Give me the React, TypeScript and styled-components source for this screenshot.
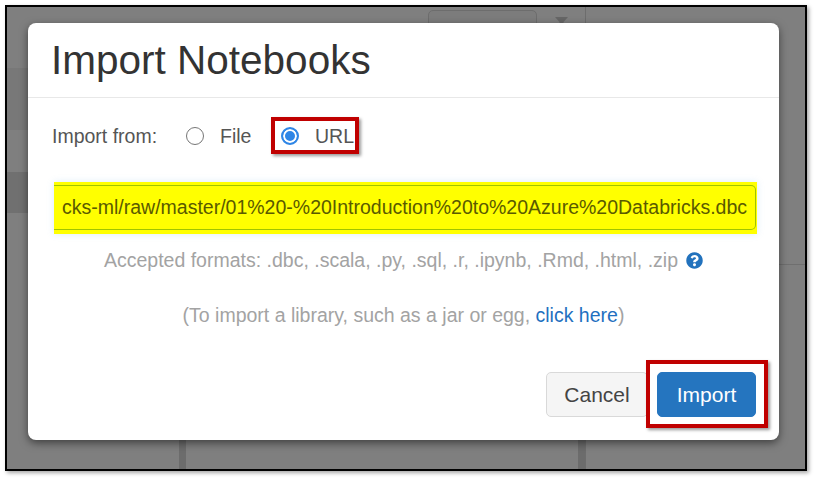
import React from "react";
import styled, { createGlobalStyle } from "styled-components";
import { FaQuestionCircle } from "react-icons/fa";

const Global = createGlobalStyle`
  html, body { margin: 0; padding: 0; background: #fff; }
  body { width: 816px; height: 480px; overflow: hidden; font-family: "Liberation Sans", Arial, sans-serif; }
`;

const Shot = styled.div`
  width: 816px;
  height: 480px;
  box-sizing: border-box;
  padding: 5px 9px 9px 5px;
`;

const Frame = styled.div`
  position: relative;
  height: 100%;
  box-sizing: border-box;
  border: 2px solid #000;
  box-shadow: 2px 2px 4px rgba(0, 0, 0, 0.35);
  background: #7f7f7f;
`;

const Backdrop = styled.div`
  display: grid;
  grid-template-columns: 172px 7px 392px 7px 1fr;
  height: 100%;
`;

const LeftColumn = styled.div`
  display: flex;
  flex-direction: column;
`;

const Band = styled.div<{ $top: number; $height: number; $tone: string }>`
  margin-top: ${(p) => p.$top}px;
  height: ${(p) => p.$height}px;
  background: ${(p) => p.$tone};
`;

const Divider = styled.div`
  margin-top: 120px;
  background: #6c6c6c;
`;

const MiddleColumn = styled.div`
  display: flex;
  justify-content: flex-end;
  padding: 3px 10px 0 0;
  gap: 18px;
  align-items: flex-start;
`;

const GhostButton = styled.div`
  width: 109px;
  height: 30px;
  box-sizing: border-box;
  border: 1px solid #6d6d6d;
  border-radius: 5px;
  background: #7c7c7c;
`;

const GhostFilter = styled.svg`
  width: 13px;
  height: 12px;
  margin-top: 7px;
  fill: #666;
`;

const RightColumn = styled.div`
  padding-top: 257px;
  border-left: 1px solid #6d6d6d;
`;

const RuleLine = styled.div`
  height: 1px;
  background: #6f6f6f;
`;

const Dialog = styled.div`
  position: absolute;
  left: 21px;
  top: 16px;
  width: 751px;
  height: 417px;
  display: flex;
  flex-direction: column;
  background: #fff;
  border-radius: 8px;
  box-shadow: 0 3px 9px rgba(0, 0, 0, 0.5);
`;

const Header = styled.div`
  height: 75px;
  box-sizing: border-box;
  padding: 14px 23px 0;
  border-bottom: 1px solid #e8e8e8;
`;

const Title = styled.h1`
  margin: 0;
  font-size: 40.5px;
  line-height: 46px;
  font-weight: 400;
  color: #333;
`;

const Body = styled.div`
  flex: 1;
  display: flex;
  flex-direction: column;
  padding: 0 22px 0 24px;
`;

const SourceRow = styled.div`
  display: flex;
  align-items: center;
  height: 30px;
  margin-top: 23px;
  font-size: 19.5px;
  color: #555;
`;

const SourceLabel = styled.span`
  width: 134px;
`;

const RadioOption = styled.label<{ $width: number }>`
  position: relative;
  display: flex;
  align-items: center;
  gap: 16px;
  width: ${(p) => p.$width}px;
`;

const RadioDot = styled.span<{ $on?: boolean }>`
  flex: none;
  width: 18px;
  height: 18px;
  box-sizing: border-box;
  border-radius: 50%;
  border: ${(p) => (p.$on ? "2px solid #2f86e6" : "1.5px solid #767676")};
  background: ${(p) => (p.$on ? "#2f86e6" : "#fff")};
  box-shadow: ${(p) => (p.$on ? "inset 0 0 0 2px #fff" : "none")};
`;

const Callout = styled.div<{ $inset: string }>`
  position: absolute;
  inset: ${(p) => p.$inset};
  border: 4px solid #c00000;
  box-shadow: 2px 2px 3px rgba(0, 0, 0, 0.4);
  pointer-events: none;
`;

const UrlField = styled.div`
  display: flex;
  align-items: stretch;
  height: 52px;
  margin: 31px 0 0 2px;
  width: 703px;
  box-sizing: border-box;
  padding: 3px 1px 4px 0;
  background: #ffff00;
  box-shadow: 0 0 7px rgba(102, 175, 233, 0.22);
`;

const UrlInner = styled.div`
  flex: 1;
  box-sizing: border-box;
  display: flex;
  align-items: center;
  padding-left: 8px;
  border: 1px solid #a0c400;
  border-left: none;
  border-radius: 0 5px 5px 0;
  font-size: 19.5px;
  color: #5a5a00;
  white-space: nowrap;
`;

const HintWrap = styled.div`
  width: 703px;
`;

const Hint = styled.p<{ $top: number }>`
  margin: ${(p) => p.$top}px 0 0;
  height: 24px;
  line-height: 24px;
  text-align: center;
  font-size: 19.5px;
  color: #a3a3a3;
  white-space: nowrap;
`;

const HelpIcon = styled(FaQuestionCircle)`
  display: inline-block;
  width: 17px;
  height: 17px;
  color: #2272bd;
  margin-left: 8px;
  vertical-align: -2px;
`;

const LinkText = styled.a`
  color: #1f70bf;
`;

const Footer = styled.div`
  display: flex;
  justify-content: flex-end;
  gap: 9px;
  padding: 0 23px 23px 0;
`;

const Button = styled.button<{ $primary?: boolean }>`
  position: relative;
  height: 45px;
  width: ${(p) => (p.$primary ? 99 : 102)}px;
  padding: 0;
  box-sizing: border-box;
  border-radius: 5px;
  border: 1px solid ${(p) => (p.$primary ? "#2575bf" : "#d9d9d9")};
  background: ${(p) => (p.$primary ? "#2575bf" : "#f5f5f5")};
  color: ${(p) => (p.$primary ? "#fff" : "#444")};
  font-family: inherit;
  font-size: 21px;
`;

export default function App() {
  return (
    <>
      <Global />
      <Shot>
        <Frame>
          <Backdrop>
            <LeftColumn>
              <Band $top={61} $height={62} $tone="#787878" />
              <Band $top={42} $height={41} $tone="#707070" />
            </LeftColumn>
            <Divider />
            <MiddleColumn>
              <GhostButton />
              <GhostFilter viewBox="0 0 13 12">
                <path d="M0 0h13L8.5 5v7h-4V5z" />
              </GhostFilter>
            </MiddleColumn>
            <Divider />
            <RightColumn>
              <RuleLine />
            </RightColumn>
          </Backdrop>
          <Dialog>
            <Header>
              <Title>Import Notebooks</Title>
            </Header>
            <Body>
              <SourceRow>
                <SourceLabel>Import from:</SourceLabel>
                <RadioOption $width={95}>
                  <RadioDot />
                  File
                </RadioOption>
                <RadioOption $width={70}>
                  <RadioDot $on />
                  URL
                  <Callout $inset="-8px -8px -6px -10px" />
                </RadioOption>
              </SourceRow>
              <UrlField>
                <UrlInner>cks-ml/raw/master/01%20-%20Introduction%20to%20Azure%20Databricks.dbc</UrlInner>
              </UrlField>
              <HintWrap>
                <Hint $top={14}>
                  Accepted formats: .dbc, .scala, .py, .sql, .r, .ipynb, .Rmd, .html, .zip
                  <HelpIcon />
                </Hint>
                <Hint $top={31}>
                  (To import a library, such as a jar or egg, <LinkText>click here</LinkText>)
                </Hint>
              </HintWrap>
            </Body>
            <Footer>
              <Button>Cancel</Button>
              <Button $primary>
                Import
                <Callout $inset="-13px -13px -12px -12px" />
              </Button>
            </Footer>
          </Dialog>
        </Frame>
      </Shot>
    </>
  );
}
